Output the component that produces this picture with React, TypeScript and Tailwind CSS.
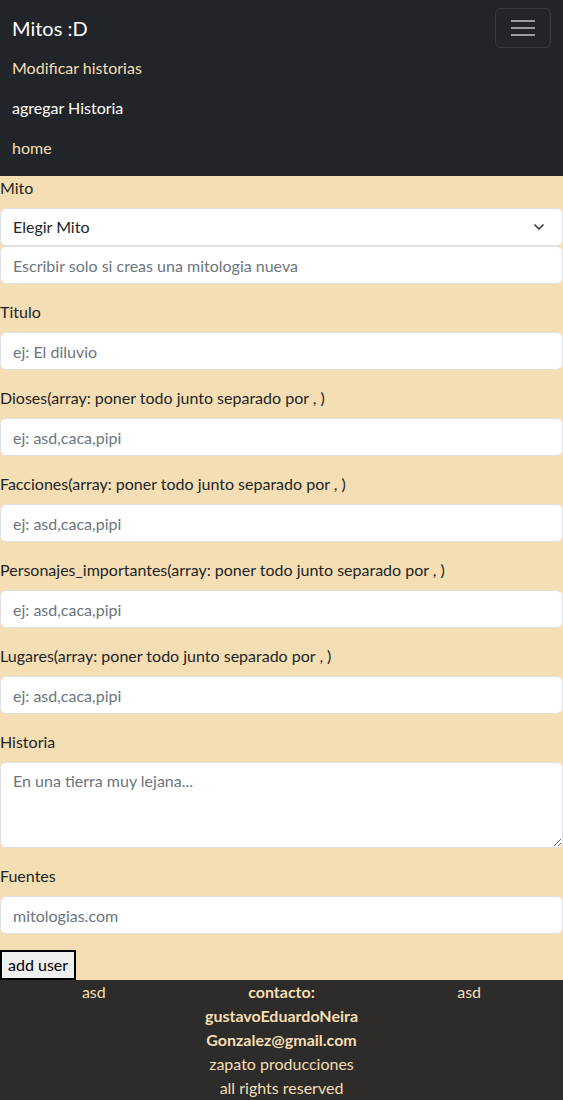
import { ChevronDown } from "lucide-react";

const fields = [
  { label: "Titulo", placeholder: "ej: El diluvio" },
  { label: "Dioses(array: poner todo junto separado por , )", placeholder: "ej: asd,caca,pipi" },
  { label: "Facciones(array: poner todo junto separado por , )", placeholder: "ej: asd,caca,pipi" },
  { label: "Personajes_importantes(array: poner todo junto separado por , )", placeholder: "ej: asd,caca,pipi" },
  { label: "Lugares(array: poner todo junto separado por , )", placeholder: "ej: asd,caca,pipi" },
];

const inputCls =
  "block h-[38px] w-full rounded-md border border-[#dee2e6] bg-white px-3 text-base text-[#212529] outline-none placeholder:text-[#6c757d]";

export default function App() {
  return (
    <div className="min-h-screen bg-[#f5deb3] font-['Lato','Noto_Sans',sans-serif] text-base leading-6 text-[#212529]">
      {/* navbar */}
      <nav className="bg-[#212529] px-3 py-2">
        <div className="flex items-center justify-between">
          <a className="py-[5px] text-xl leading-[30px] text-white">Mitos :D</a>
          <button className="flex h-10 w-14 items-center justify-center rounded-md border border-white/10">
            <svg width="24" height="20" viewBox="0 0 24 20">
              <path d="M0 3h24M0 10h24M0 17h24" stroke="rgba(255,255,255,0.55)" strokeWidth="2" />
            </svg>
          </button>
        </div>
        <ul className="flex flex-col">
          <li className="py-2 text-[#f5deb3]">Modificar historias</li>
          <li className="py-2 text-white">agregar Historia</li>
          <li className="py-2 text-[#f5deb3]">home</li>
        </ul>
      </nav>

      {/* form */}
      <form className="flex flex-col">
        <div className="mb-4">
          <label className="mb-2 block">Mito</label>
          <div className="relative">
            <select className={inputCls + " appearance-none"}>
              <option>Elegir Mito</option>
            </select>
            <ChevronDown className="pointer-events-none absolute right-4 top-[11px] size-4 text-[#343a40]" strokeWidth={2.5} />
          </div>
          <input className={inputCls} placeholder="Escribir solo si creas una mitologia nueva" />
        </div>

        {fields.map((f) => (
          <div key={f.label} className="mb-4">
            <label className="mb-2 block">{f.label}</label>
            <input className={inputCls} placeholder={f.placeholder} />
          </div>
        ))}

        <div className="mb-4">
          <label className="mb-2 block">Historia</label>
          <textarea
            className="block h-[86px] w-full rounded-md border border-[#dee2e6] bg-white px-3 py-1.5 text-base text-[#212529] outline-none placeholder:text-[#6c757d]"
            placeholder="En una tierra muy lejana..."
          />
        </div>

        <div className="mb-4">
          <label className="mb-2 block">Fuentes</label>
          <input className={inputCls} placeholder="mitologias.com" />
        </div>

        <div>
          <button type="button" className="h-[30px] border-2 border-black bg-[#efefef] px-1.5 text-base leading-6 text-black">
            add user
          </button>
        </div>
      </form>

      {/* footer */}
      <footer className="bg-[#2d2c2a] text-center text-[#f5deb3]">
        <div className="grid grid-cols-3">
          <div>asd</div>
          <div className="font-bold">
            contacto:
            <br />
            gustavoEduardoNeira
            <br />
            Gonzalez@gmail.com
          </div>
          <div>asd</div>
        </div>
        <div>zapato producciones</div>
        <div>all rights reserved</div>
      </footer>
    </div>
  );
}
